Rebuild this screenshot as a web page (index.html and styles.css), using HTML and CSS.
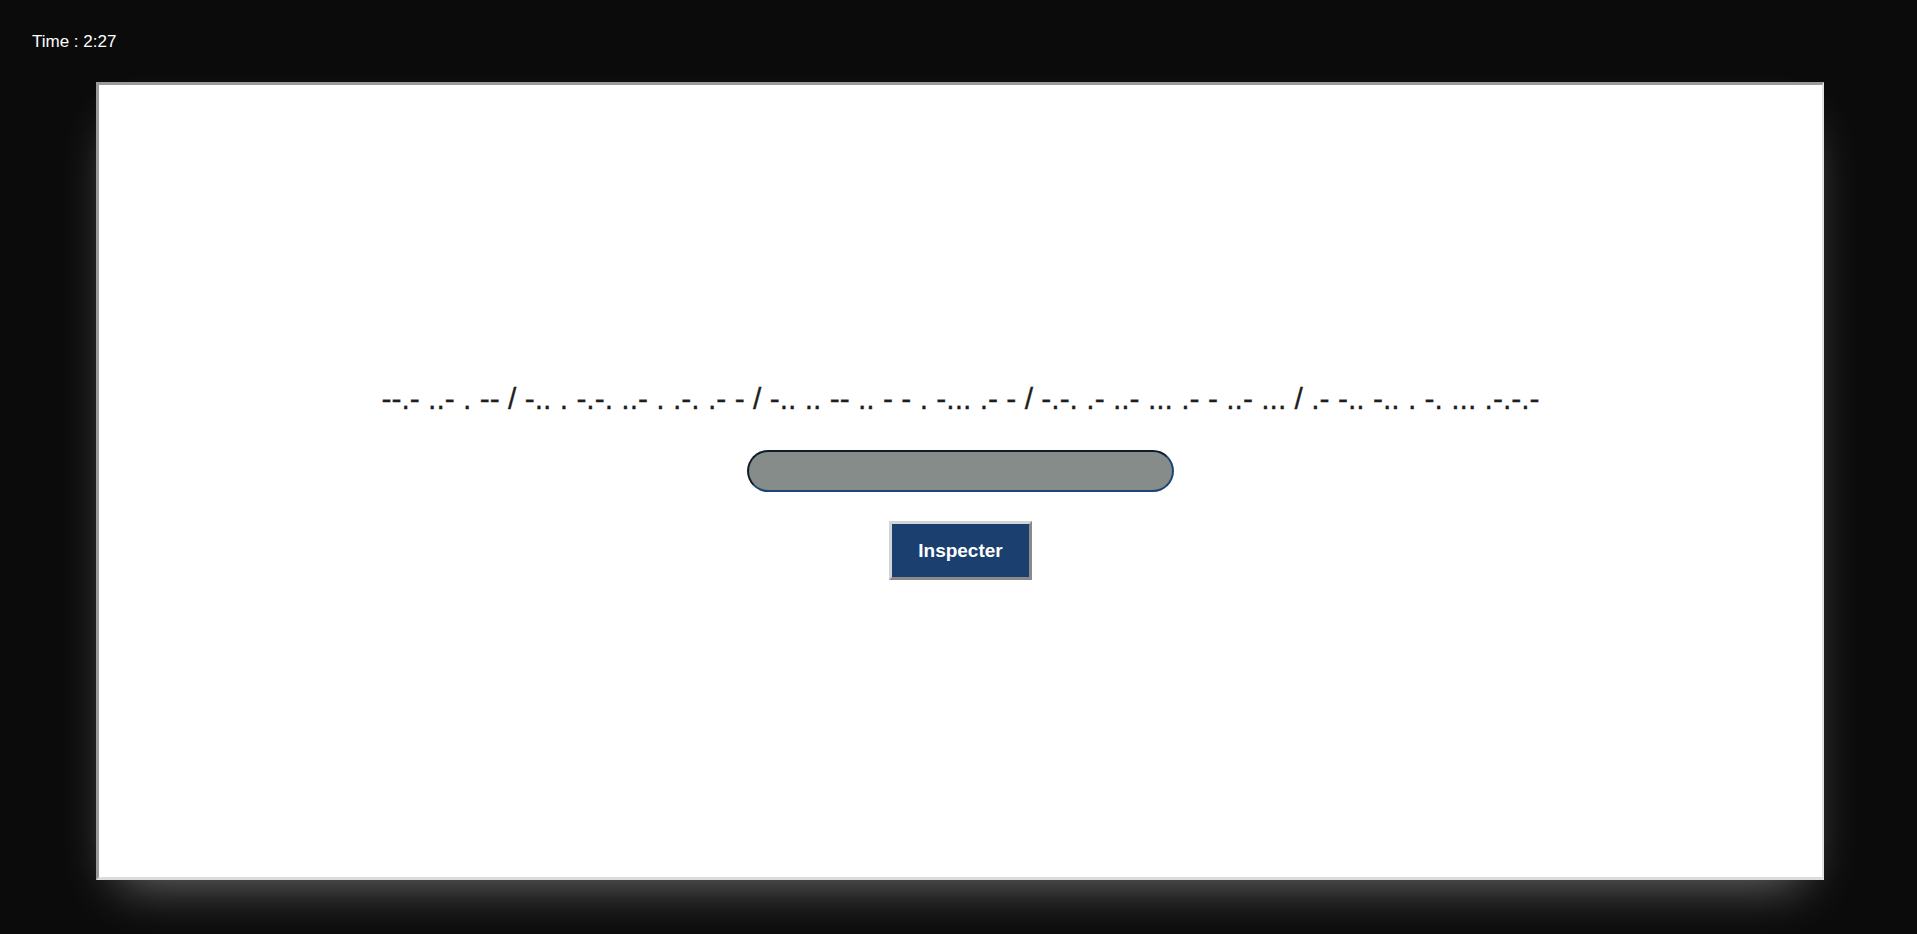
FILE: index.html
```html
<!DOCTYPE html>
<html lang="fr">
<head>
<meta charset="utf-8">
<title>Morse</title>
<link rel="stylesheet" href="styles.css">
</head>
<body>
<div class="timer">Time : 2:27</div>
<main class="panel">
  <h2 class="code">--.- ..- . -- / -.. . -.-. ..- . .-. .- - / -.. .. -- .. - - . -... .- - / -.-. .- ..- ... .- - ..- ... / .- -.. -.. . -. ... .-.-.-</h2>
  <input class="answer" type="text">
  <button class="inspect" type="button">Inspecter</button>
</main>
</body>
</html>
```

FILE: styles.css
```css
html, body {
  margin: 0;
  padding: 0;
  background: #0b0b0b;
  height: 100%;
  overflow: hidden;
}

body {
  font-family: "Liberation Sans", Arial, sans-serif;
  padding-top: 32px;
  box-sizing: border-box;
}

.timer {
  color: #ffffff;
  font-size: 17px;
  padding-left: 32px;
  height: 50px;
}

.panel {
  box-sizing: border-box;
  margin-left: 96px;
  width: 1728px;
  height: 798px;
  background: #ffffff;
  border-style: solid;
  border-width: 3px 2px 3px 3px;
  border-color: #9a9a9a #e2e2e2 #dcdcdc #9a9a9a;
  box-shadow: 0 24px 50px -22px rgba(255, 255, 255, 0.45);
  display: flex;
  flex-direction: column;
  align-items: center;
  justify-content: center;
}

.code {
  margin: 0 0 34px 0;
  font-size: 30px;
  font-weight: normal;
  color: #1e1e1e;
  white-space: nowrap;
  -webkit-text-stroke: 0.3px #1e1e1e;
}

.answer {
  box-sizing: border-box;
  width: 427px;
  height: 42px;
  margin: 0 0 29px 0;
  border-radius: 21px;
  border: 2px solid;
  border-color: #0f1c2b #1b4575 #1b4575 #0f1c2b;
  background: #858c8a;
  outline: none;
}

.inspect {
  box-sizing: border-box;
  width: 143px;
  height: 59px;
  margin: 0;
  border: 3px solid;
  border-color: #d4d4d4 #8a8a8a #8a8a8a #d4d4d4;
  background: #1b3f6f;
  color: #ffffff;
  font-family: "Liberation Sans", Arial, sans-serif;
  font-weight: bold;
  font-size: 19px;
  padding: 0;
}
```
